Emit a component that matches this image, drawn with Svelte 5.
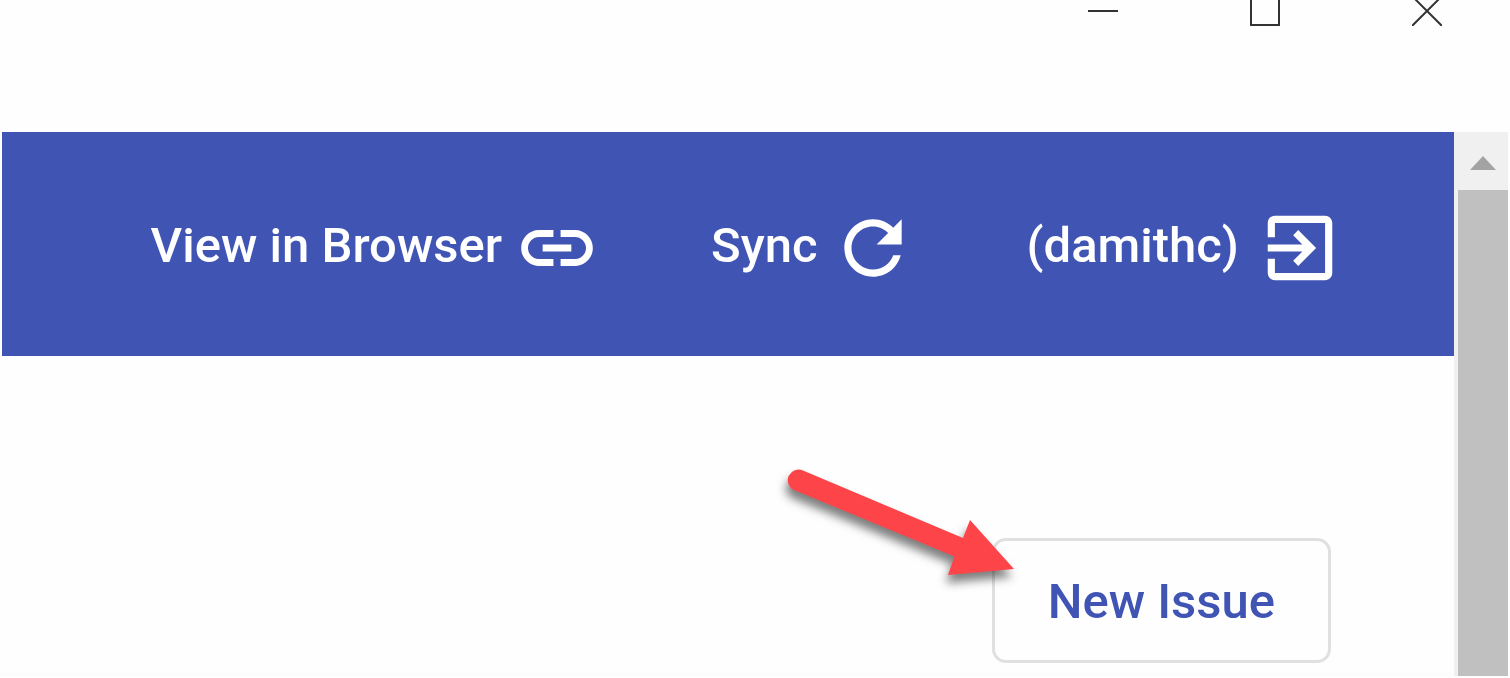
<script>
  const actions = [
    {
      label: 'View in Browser',
      kind: 'link',
      path: 'M3.9 12c0-1.71 1.39-3.1 3.1-3.1h4V7H7c-2.76 0-5 2.24-5 5s2.24 5 5 5h4v-1.9H7c-1.71 0-3.1-1.39-3.1-3.1zM8 13h8v-2H8v2zm9-6h-4v1.9h4c1.71 0 3.1 1.39 3.1 3.1s-1.39 3.1-3.1 3.1h-4V17h4c2.76 0 5-2.24 5-5s-2.24-5-5-5z'
    },
    {
      label: 'Sync',
      kind: 'sync',
      path: 'M17.65 6.35C16.2 4.9 14.21 4 12 4c-4.42 0-7.99 3.58-7.99 8s3.57 8 7.99 8c3.73 0 6.84-2.55 7.73-6h-2.08c-.82 2.33-3.04 4-5.65 4-3.31 0-6-2.69-6-6s2.69-6 6-6c1.66 0 3.14.69 4.22 1.78L13 11h7V4l-2.35 2.35z'
    },
    {
      label: '(damithc)',
      kind: 'logout',
      path: 'M10.09 15.59L11.5 17l5-5-5-5-1.41 1.41L12.67 11H3v2h9.67l-2.58 2.59zM19 3H5c-1.11 0-2 .9-2 2v4h2V5h14v14H5v-4H3v4c0 1.1.89 2 2 2h14c1.1 0 2-.9 2-2V5c0-1.1-.9-2-2-2z'
    }
  ];
</script>

<div class="window">
  <div class="titlebar">
    <button aria-label="Minimize">
      <svg viewBox="0 4 30 26"><path d="M0 15h30" /></svg>
    </button>
    <button aria-label="Maximize">
      <svg viewBox="0 4 30 26"><path d="M1 1h28v28H1z" /></svg>
    </button>
    <button aria-label="Close">
      <svg viewBox="0 4 30 26"><path d="M0 0l30 30M30 0L0 30" /></svg>
    </button>
  </div>

  <div class="viewport">
    <div class="page">
      <header>
        {#each actions as action}
          <button class={action.kind}>
            <span>{action.label}</span>
            <svg viewBox="0 0 24 24" aria-hidden="true"><path d={action.path} /></svg>
          </button>
        {/each}
      </header>
      <main>
        <div class="callout">
          <button class="new-issue">New Issue</button>
          <svg class="arrow" viewBox="0 0 250 130" aria-hidden="true">
            <path d="M33 20.500L193 88L200 70L244 119L178 125L184.500 106.500L24 40A10.300 10.300 0 0 1 33 20.500Z" />
          </svg>
        </div>
      </main>
    </div>
    <div class="scrollbar">
      <button aria-label="Scroll up">
        <svg viewBox="0 0 26 14"><path d="M0 14L13 0l13 14z" /></svg>
      </button>
      <div class="thumb"></div>
    </div>
  </div>
</div>

<style>
  :global(body) {
    margin: 0;
    background: #fefefe;
  }

  .window {
    box-sizing: border-box;
    min-height: 100vh;
    padding: 0 2px 2px;
    display: flex;
    flex-direction: column;
    font-family: Roboto, sans-serif;
  }

  button {
    margin: 0;
    padding: 0;
    border: 0;
    background: none;
    font: inherit;
    color: inherit;
    cursor: pointer;
  }

  svg {
    display: block;
  }

  .titlebar {
    display: flex;
    justify-content: flex-end;
    height: 132px;
  }

  .titlebar button {
    width: 162px;
    display: flex;
    justify-content: center;
    align-items: flex-start;
  }

  .titlebar svg {
    width: 30px;
    height: 26px;
    fill: none;
    stroke: #333;
    stroke-width: 2;
  }

  .viewport {
    flex: 1;
    display: flex;
  }

  .page {
    flex: 1;
    display: flex;
    flex-direction: column;
  }

  header {
    box-sizing: border-box;
    height: 224px;
    padding: 2px 111px 0 0;
    display: flex;
    justify-content: flex-end;
    align-items: center;
    gap: 111px;
    background: #4054b4;
    color: #fff;
    font-size: 49px;
    font-weight: 500;
  }

  header button {
    display: flex;
    align-items: center;
    gap: 12px;
    white-space: nowrap;
  }

  header svg {
    width: 86px;
    height: 86px;
    margin-top: 6px;
    fill: currentColor;
  }

  header .logout {
    gap: 18px;
  }

  main {
    flex: 1;
    padding: 182px 123px 0 0;
    display: flex;
    justify-content: flex-end;
    align-items: flex-start;
    border-bottom: 3px solid #fcfcfc;
  }

  .callout {
    position: relative;
  }

  .new-issue {
    padding: 2px 53px 0;
    border: 3px solid #e0e0e0;
    border-radius: 14px;
    font-size: 49px;
    font-weight: 500;
    line-height: 117px;
    color: #4054b4;
    white-space: nowrap;
  }

  .arrow {
    position: absolute;
    top: -88px;
    right: 311px;
    width: 250px;
    height: 130px;
    overflow: visible;
    fill: #fd4449;
    filter: drop-shadow(-2px 8px 5px rgba(0, 0, 0, 0.5));
  }

  .scrollbar {
    width: 54px;
    display: flex;
    flex-direction: column;
    background: #f0f0f0;
  }

  .scrollbar button {
    height: 58px;
    padding: 4px 0 0 4px;
    display: flex;
    justify-content: center;
    align-items: center;
  }

  .scrollbar svg {
    width: 26px;
    height: 14px;
    fill: #a3a3a3;
  }

  .thumb {
    flex: 1;
    margin-left: 4px;
    background: #c0c0c0;
  }
</style>
